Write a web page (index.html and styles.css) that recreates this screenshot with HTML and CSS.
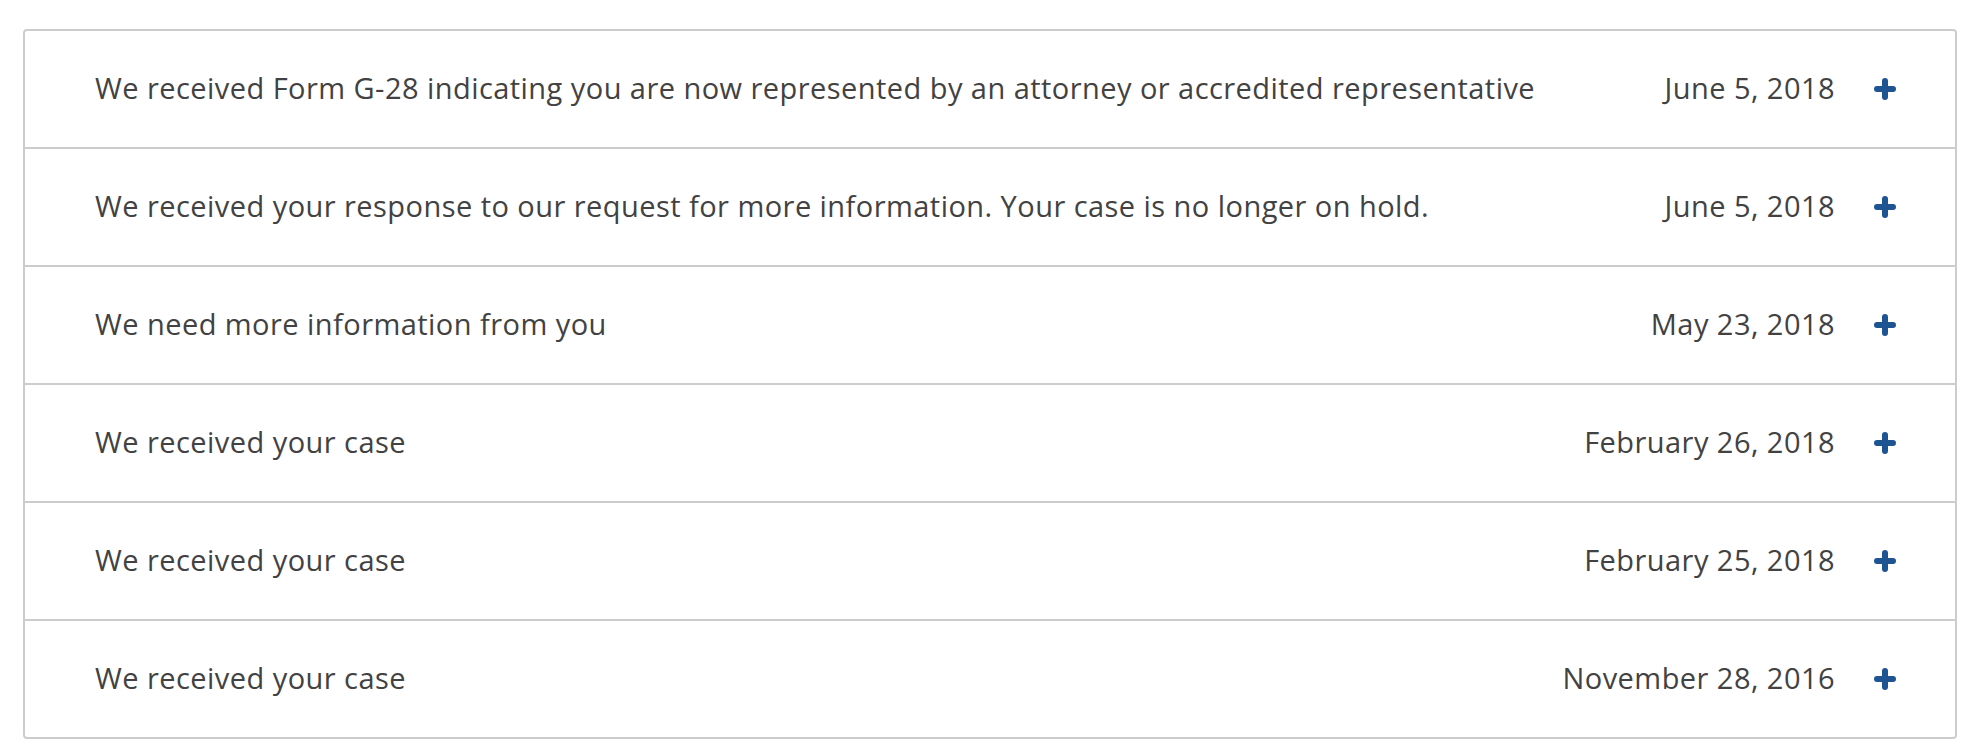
FILE: index.html
```html
<!DOCTYPE html>
<html lang="en">
<head>
<meta charset="utf-8">
<title>Case history</title>
<link rel="stylesheet" href="styles.css">
</head>
<body>
<div class="page">
  <ul class="history">
    <li class="row">
      <span class="event">We received Form G-28 indicating you are now represented by an attorney or accredited representative</span>
      <span class="date">June 5, 2018</span>
      <span class="toggle"><svg viewBox="0 0 22 22" width="22" height="22"><path d="M11 3v16M3 11h16" stroke="#1f5493" stroke-width="6" stroke-linecap="round"/></svg></span>
    </li>
    <li class="row">
      <span class="event">We received your response to our request for more information. Your case is no longer on hold.</span>
      <span class="date">June 5, 2018</span>
      <span class="toggle"><svg viewBox="0 0 22 22" width="22" height="22"><path d="M11 3v16M3 11h16" stroke="#1f5493" stroke-width="6" stroke-linecap="round"/></svg></span>
    </li>
    <li class="row">
      <span class="event">We need more information from you</span>
      <span class="date">May 23, 2018</span>
      <span class="toggle"><svg viewBox="0 0 22 22" width="22" height="22"><path d="M11 3v16M3 11h16" stroke="#1f5493" stroke-width="6" stroke-linecap="round"/></svg></span>
    </li>
    <li class="row">
      <span class="event">We received your case</span>
      <span class="date">February 26, 2018</span>
      <span class="toggle"><svg viewBox="0 0 22 22" width="22" height="22"><path d="M11 3v16M3 11h16" stroke="#1f5493" stroke-width="6" stroke-linecap="round"/></svg></span>
    </li>
    <li class="row">
      <span class="event">We received your case</span>
      <span class="date">February 25, 2018</span>
      <span class="toggle"><svg viewBox="0 0 22 22" width="22" height="22"><path d="M11 3v16M3 11h16" stroke="#1f5493" stroke-width="6" stroke-linecap="round"/></svg></span>
    </li>
    <li class="row">
      <span class="event">We received your case</span>
      <span class="date">November 28, 2016</span>
      <span class="toggle"><svg viewBox="0 0 22 22" width="22" height="22"><path d="M11 3v16M3 11h16" stroke="#1f5493" stroke-width="6" stroke-linecap="round"/></svg></span>
    </li>
  </ul>
</div>
</body>
</html>
```

FILE: styles.css
```css
html, body {
  margin: 0;
  padding: 0;
  background: #ffffff;
}

.page {
  padding: 29px 25px 18px 23px;
  font-family: "Open Sans", Lato, "Liberation Sans", sans-serif;
  color: #424242;
}

.history {
  list-style: none;
  margin: 0;
  padding: 0;
  border: 2px solid #cccccc;
  border-radius: 4px;
}

.row {
  display: flex;
  align-items: center;
  height: 116px;
  padding: 0 59px 0 70px;
  border-bottom: 2px solid #cccccc;
  font-size: 29px;
  line-height: 1;
  letter-spacing: 0.45px;
}

.row:last-child {
  border-bottom: none;
}

.event {
  flex: 1;
  white-space: nowrap;
  position: relative;
  top: -2px;
}

.date {
  white-space: nowrap;
  margin-right: 39px;
  position: relative;
  top: -2px;
}

.toggle {
  display: flex;
  width: 22px;
  height: 22px;
}

.toggle svg {
  display: block;
}
```
